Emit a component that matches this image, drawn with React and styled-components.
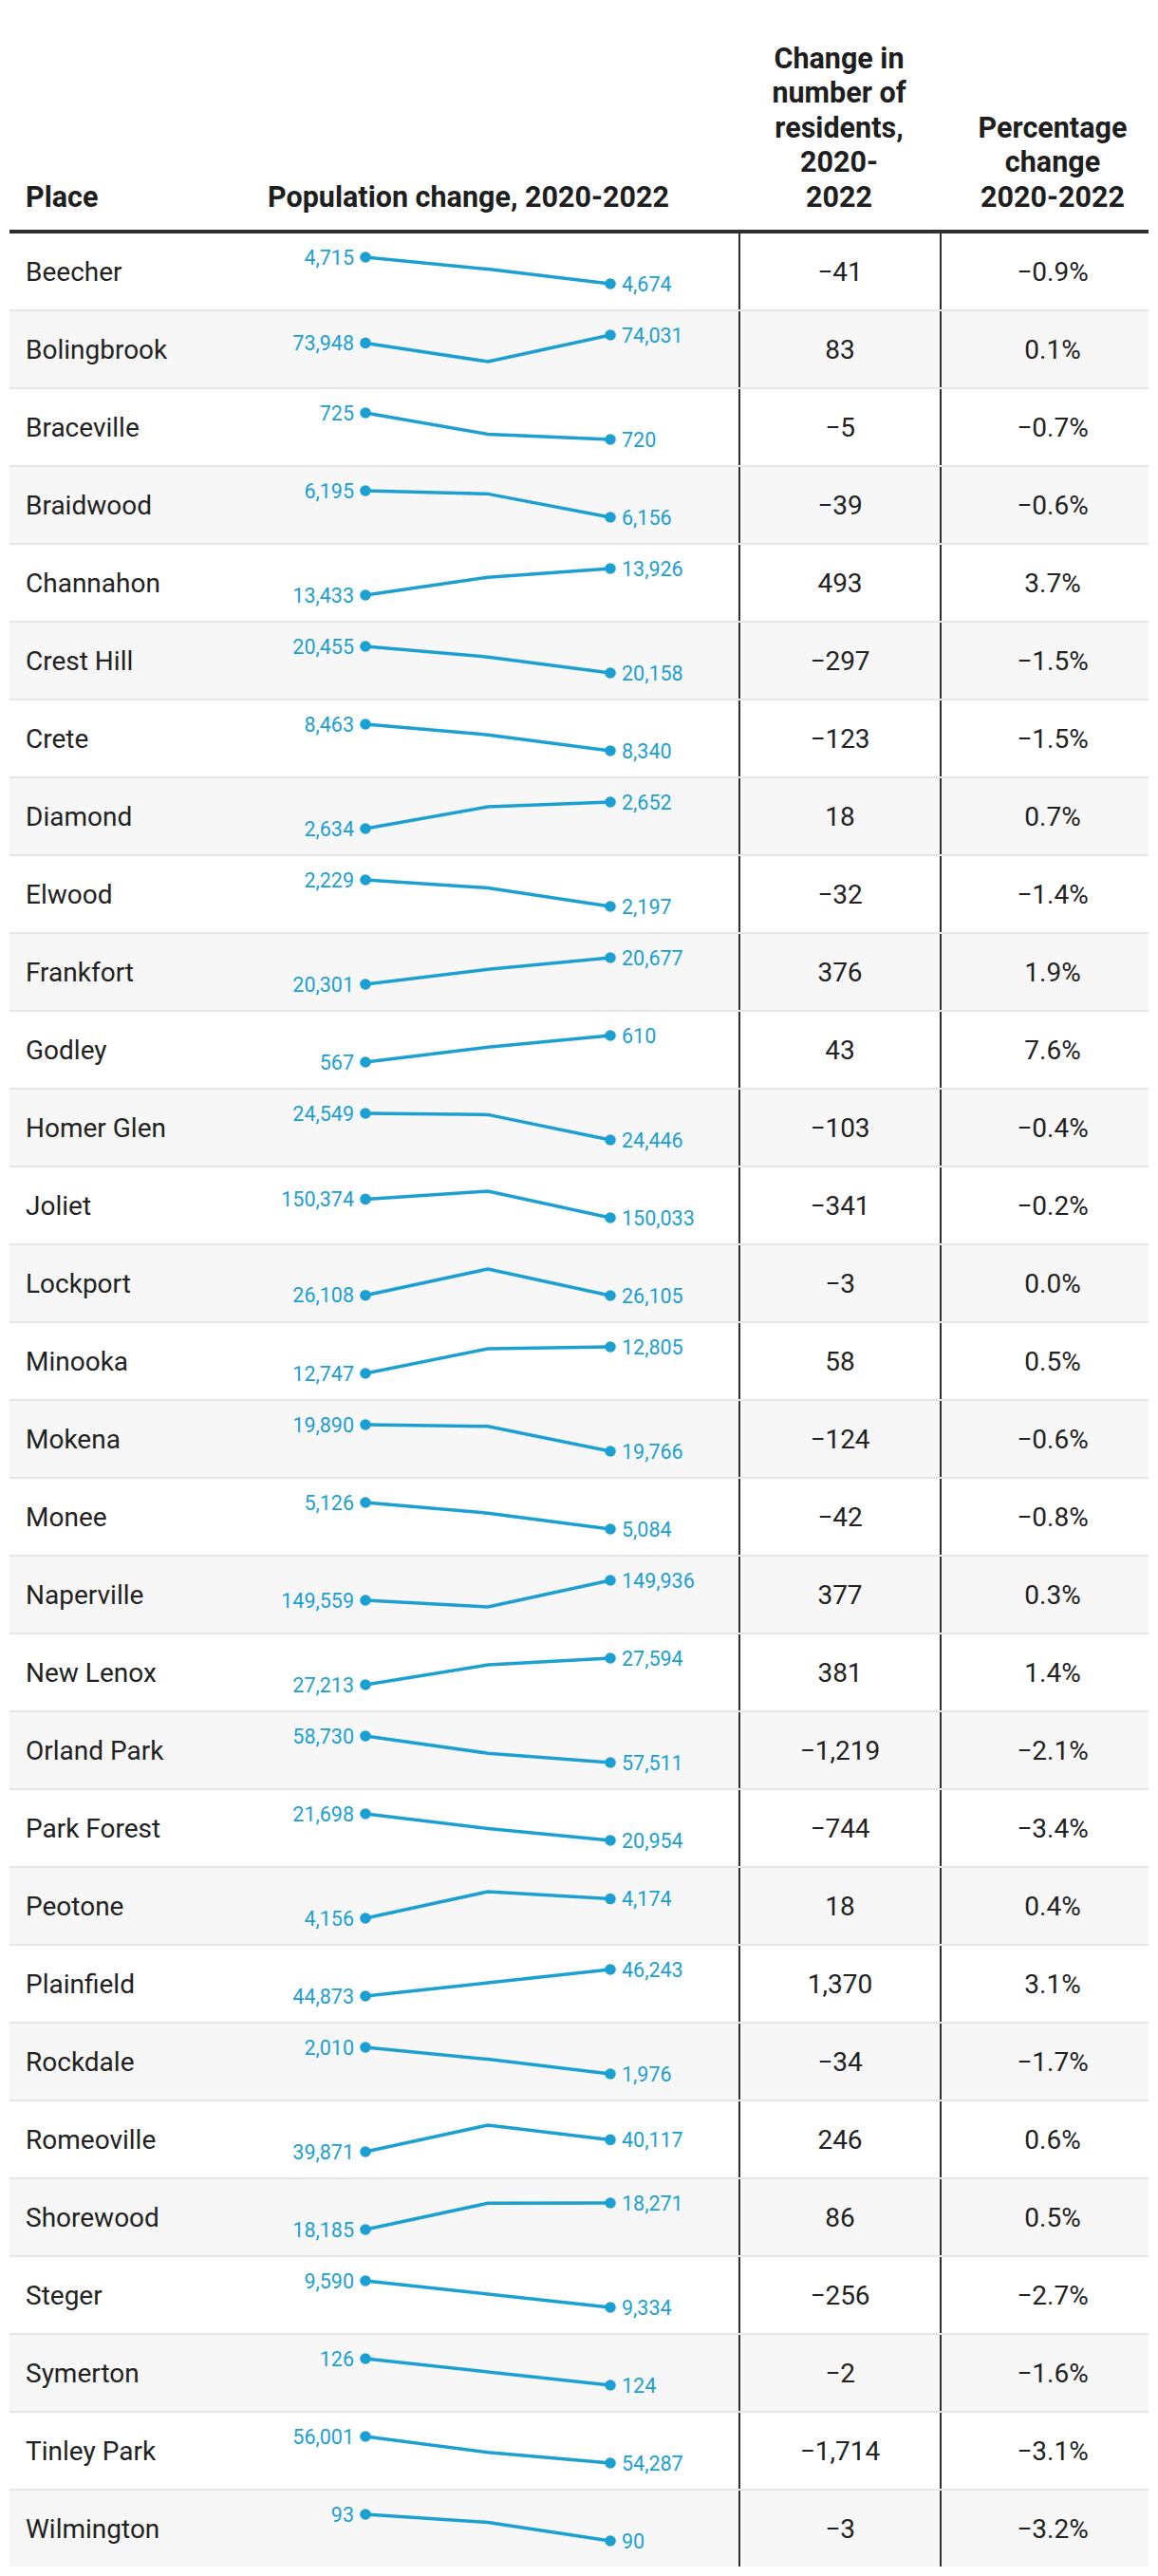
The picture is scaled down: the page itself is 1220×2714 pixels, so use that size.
import React from 'react';
import styled, { createGlobalStyle } from 'styled-components';

const GlobalStyle = createGlobalStyle`
  body {
    margin: 0;
    background: #fff;
    font-family: Roboto, "Liberation Sans", Arial, sans-serif;
    color: #222;
  }
`;

// name, 2020, 2022, change, pct, y fractions for 2020/2021/2022 (0 = top, 1 = bottom)
const rows = [
  ['Beecher', '4,715', '4,674', '−41', '−0.9%', [0, 0.45, 1]],
  ['Bolingbrook', '73,948', '74,031', '83', '0.1%', [0.3, 1, 0]],
  ['Braceville', '725', '720', '−5', '−0.7%', [0, 0.8, 1]],
  ['Braidwood', '6,195', '6,156', '−39', '−0.6%', [0, 0.12, 1]],
  ['Channahon', '13,433', '13,926', '493', '3.7%', [1, 0.33, 0]],
  ['Crest Hill', '20,455', '20,158', '−297', '−1.5%', [0, 0.4, 1]],
  ['Crete', '8,463', '8,340', '−123', '−1.5%', [0, 0.4, 1]],
  ['Diamond', '2,634', '2,652', '18', '0.7%', [1, 0.18, 0]],
  ['Elwood', '2,229', '2,197', '−32', '−1.4%', [0, 0.3, 1]],
  ['Frankfort', '20,301', '20,677', '376', '1.9%', [1, 0.44, 0]],
  ['Godley', '567', '610', '43', '7.6%', [1, 0.44, 0]],
  ['Homer Glen', '24,549', '24,446', '−103', '−0.4%', [0, 0.05, 1]],
  ['Joliet', '150,374', '150,033', '−341', '−0.2%', [0.3, 0, 1]],
  ['Lockport', '26,108', '26,105', '−3', '0.0%', [0.99, 0, 1]],
  ['Minooka', '12,747', '12,805', '58', '0.5%', [1, 0.07, 0]],
  ['Mokena', '19,890', '19,766', '−124', '−0.6%', [0, 0.06, 1]],
  ['Monee', '5,126', '5,084', '−42', '−0.8%', [0, 0.4, 1]],
  ['Naperville', '149,559', '149,936', '377', '0.3%', [0.75, 1, 0]],
  ['New Lenox', '27,213', '27,594', '381', '1.4%', [1, 0.25, 0]],
  ['Orland Park', '58,730', '57,511', '−1,219', '−2.1%', [0, 0.65, 1]],
  ['Park Forest', '21,698', '20,954', '−744', '−3.4%', [0, 0.55, 1]],
  ['Peotone', '4,156', '4,174', '18', '0.4%', [1, 0, 0.27]],
  ['Plainfield', '44,873', '46,243', '1,370', '3.1%', [1, 0.5, 0]],
  ['Rockdale', '2,010', '1,976', '−34', '−1.7%', [0, 0.45, 1]],
  ['Romeoville', '39,871', '40,117', '246', '0.6%', [1, 0, 0.55]],
  ['Shorewood', '18,185', '18,271', '86', '0.5%', [1, 0.01, 0]],
  ['Steger', '9,590', '9,334', '−256', '−2.7%', [0, 0.5, 1]],
  ['Symerton', '126', '124', '−2', '−1.6%', [0, 0.5, 1]],
  ['Tinley Park', '56,001', '54,287', '−1,714', '−3.1%', [0, 0.6, 1]],
  ['Wilmington', '93', '90', '−3', '−3.2%', [0, 0.3, 1]],
];

const BLUE = '#1ca0d2';
const COLS = '255px 513px 212px 1fr';

const Page = styled.div`
  padding: 10px;
`;

const Table = styled.div`
  width: 1200px;
`;

const HeaderRow = styled.div`
  display: grid;
  grid-template-columns: ${COLS};
  align-items: end;
  height: 216px;
  padding-bottom: 16px;
  border-bottom: 4px solid #2e2e2e;
`;

const HeadCell = styled.div`
  font-size: 30.5px;
  font-weight: 700;
  line-height: 36.4px;
  color: #1e1e1e;
  white-space: nowrap;
  text-align: ${(p) => (p.$center ? 'center' : 'left')};
  padding-left: ${(p) => p.$padLeft || 0}px;
`;

const Row = styled.div`
  display: grid;
  grid-template-columns: ${COLS};
  height: 80px;
  background: ${(p) => (p.$alt ? '#f7f7f7' : '#fff')};
  border-bottom: ${(p) => (p.$last ? 'none' : '2px solid #e6e6e6')};
`;

const Cell = styled.div`
  display: flex;
  align-items: center;
  justify-content: ${(p) => (p.$center ? 'center' : 'flex-start')};
  padding-left: ${(p) => p.$padLeft || 0}px;
  border-left: ${(p) => (p.$rule ? '2px solid #2e2e2e' : 'none')};
  font-size: 28px;
  color: #222;
`;

const SparkCell = styled.div`
  position: relative;
`;

const Label = styled.text`
  font-family: Roboto, "Liberation Sans", Arial, sans-serif;
  font-size: 21.5px;
  fill: ${BLUE};
`;

const TOP = 25;
const RANGE = 28;
const XS = [120, 249, 378];

const Spark = ({ start, end, f }) => {
  const ys = f.map((v) => TOP + v * RANGE);
  const pts = XS.map((x, i) => `${x},${ys[i]}`).join(' ');
  return (
    <svg width="513" height="80" style={{ display: 'block' }}>
      <polyline points={pts} fill="none" stroke={BLUE} strokeWidth="3.5" strokeLinejoin="round" />
      <circle cx={XS[0]} cy={ys[0]} r="5.8" fill={BLUE} />
      <circle cx={XS[2]} cy={ys[2]} r="5.8" fill={BLUE} />
      <Label x={XS[0] - 12} y={ys[0]} textAnchor="end" dominantBaseline="central">{start}</Label>
      <Label x={XS[2] + 12} y={ys[2]} textAnchor="start" dominantBaseline="central">{end}</Label>
    </svg>
  );
};

export default function App() {
  return (
    <Page>
      <GlobalStyle />
      <Table>
        <HeaderRow>
          <HeadCell $padLeft={17}>Place</HeadCell>
          <HeadCell $padLeft={17}>Population change, 2020-2022</HeadCell>
          <HeadCell $center>
            Change in<br />number of<br />residents,<br />2020-<br />2022
          </HeadCell>
          <HeadCell $center $padLeft={18}>
            Percentage<br />change<br />2020-2022
          </HeadCell>
        </HeaderRow>
        {rows.map(([name, a, b, chg, pct, f], i) => (
          <Row key={name} $alt={i % 2 === 1} $last={i === rows.length - 1}>
            <Cell $padLeft={17}>{name}</Cell>
            <SparkCell>
              <Spark start={a} end={b} f={f} />
            </SparkCell>
            <Cell $center $rule>{chg}</Cell>
            <Cell $center $rule $padLeft={16}>{pct}</Cell>
          </Row>
        ))}
      </Table>
    </Page>
  );
}
